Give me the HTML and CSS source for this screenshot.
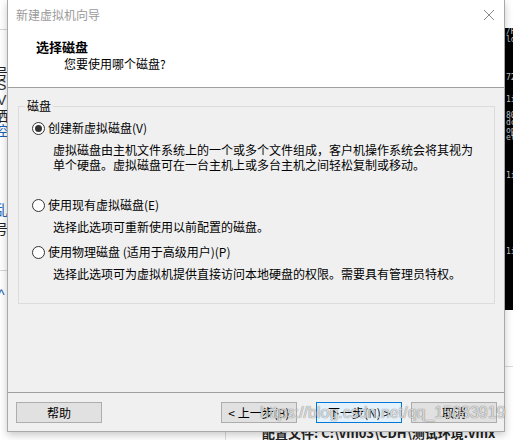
FILE: index.html
```html
<!DOCTYPE html>
<html lang="zh-CN">
<head>
<meta charset="utf-8">
<title>新建虚拟机向导</title>
<link rel="stylesheet" href="styles.css">
</head>
<body>
  <div class="bg-left">
    <div class="bg-left-rule top"></div>
    <span class="frag f1">号</span>
    <span class="frag f2">S</span>
    <span class="frag f3">V</span>
    <span class="frag f4">硒</span>
    <span class="frag f5 blue">控</span>
    <span class="frag f6 blue">乱</span>
    <span class="frag f7">号</span>
    <div class="bg-left-rule mid"></div>
    <span class="frag f8 blue">^</span>
  </div>

  <div class="bg-term">
    <pre>/H
lo




72


1i

80
dc
op
et




1i









1i</pre>
  </div>
  <div class="bg-right-rule"></div>

  <div class="bg-bottom">
    <div class="bg-bottom-vline"></div>
    <span class="bg-bottom-text">配置文件: C:\vm03\CDH\测试环境.vmx</span>
  </div>

  <div class="dialog">
    <div class="titlebar">
      <span class="title">新建虚拟机向导</span>
      <svg class="close" width="12" height="12" viewBox="0 0 12 12"><path d="M1 1 L11 11 M11 1 L1 11" stroke="#8a8a8a" stroke-width="1" fill="none"/></svg>
    </div>
    <div class="header">
      <div class="h-title">选择磁盘</div>
      <div class="h-sub">您要使用哪个磁盘?</div>
    </div>
    <div class="body">
      <fieldset class="group">
        <legend>磁盘</legend>
        <div class="options">
          <div class="opt">
            <span class="radio checked"></span><span class="opt-label">创建新虚拟磁盘(V)</span>
          </div>
          <div class="desc">虚拟磁盘由主机文件系统上的一个或多个文件组成，客户机操作系统会将其视为<br>单个硬盘。虚拟磁盘可在一台主机上或多台主机之间轻松复制或移动。</div>
          <div class="opt opt2">
            <span class="radio"></span><span class="opt-label">使用现有虚拟磁盘(E)</span>
          </div>
          <div class="desc">选择此选项可重新使用以前配置的磁盘。</div>
          <div class="opt opt3">
            <span class="radio"></span><span class="opt-label">使用物理磁盘 (适用于高级用户)(P)</span>
          </div>
          <div class="desc">选择此选项可为虚拟机提供直接访问本地硬盘的权限。需要具有管理员特权。</div>
        </div>
      </fieldset>
    </div>
    <div class="footer">
      <button class="btn">帮助</button>
      <button class="btn back">&lt; 上一步(B)</button>
      <button class="btn next">下一步(N) &gt;</button>
      <button class="btn cancel">取消</button>
    </div>
  </div>

  <div class="watermark">https://blog.csdn.net/qq_15083919</div>
</body>
</html>
```

FILE: styles.css
```css
html, body {
  margin: 0;
  padding: 0;
}
body {
  width: 513px;
  height: 440px;
  position: relative;
  overflow: hidden;
  background: #ffffff;
  font-family: "Noto Sans CJK SC", "Microsoft YaHei", sans-serif;
  font-size: 12px;
  color: #000;
}

/* background windows */
.bg-left {
  position: absolute;
  left: 0;
  top: 0;
  width: 20px;
  height: 440px;
  background: #fff;
}
.bg-left-rule {
  position: absolute;
  left: 0;
  width: 20px;
  height: 1px;
  background: #d6d6d6;
}
.bg-left-rule.top { top: 29px; }
.bg-left-rule.mid { top: 270px; }
.frag {
  position: absolute;
  left: -6px;
  font-size: 14px;
  line-height: 16px;
  color: #222;
}
.frag.blue { color: #1a5fb4; }
.f1 { top: 64px; }
.f2 { top: 77px; left: -3px; font-family: "Liberation Sans", sans-serif; color: #333; }
.f3 { top: 92px; left: -3px; font-family: "Liberation Sans", sans-serif; color: #333; }
.f4 { top: 107px; }
.f5 { top: 122px; }
.f6 { top: 201px; }
.f7 { top: 220px; }
.f8 { top: 287px; left: -2px; font-family: "Liberation Sans", sans-serif; }

.bg-term {
  position: absolute;
  left: 495px;
  top: 28px;
  width: 18px;
  height: 282px;
  background: #000;
  overflow: hidden;
}
.bg-term pre {
  margin: 0;
  padding: 0 0 0 11px;
  font-family: "DejaVu Sans Mono", monospace;
  font-size: 8px;
  line-height: 7.6px;
  color: #c8c8c8;
}
.bg-right-rule {
  position: absolute;
  left: 495px;
  top: 366px;
  width: 18px;
  height: 1px;
  background: #d9d9d9;
}
.bg-bottom {
  position: absolute;
  left: 0;
  top: 420px;
  width: 513px;
  height: 20px;
}
.bg-bottom-vline {
  position: absolute;
  left: 225px;
  top: 0;
  width: 1px;
  height: 20px;
  background: #dadada;
}
.bg-bottom-text {
  position: absolute;
  left: 262px;
  top: 5px;
  font-size: 13px;
  line-height: 16px;
  font-weight: bold;
  color: #222;
  white-space: nowrap;
}

/* dialog window */
.dialog {
  position: absolute;
  left: 7px;
  top: 0;
  width: 498px;
  height: 432px;
  box-sizing: border-box;
  border: 1px solid #a9a9a9;
  border-top: 0;
  background: #f0f0f0;
  box-shadow: 0 3px 8px rgba(0, 0, 0, 0.22);
  display: flex;
  flex-direction: column;
  z-index: 2;
}
.titlebar {
  height: 30px;
  flex: none;
  background: #fff;
  display: flex;
  align-items: center;
  justify-content: space-between;
  padding: 0 9px 0 8px;
}
.title {
  color: #9a9a9a;
  font-size: 12px;
  line-height: 16px;
}
.close {
  display: block;
}
.header {
  height: 58px;
  flex: none;
  box-sizing: border-box;
  background: #fff;
  border-bottom: 1px solid #a0a0a0;
  padding: 9px 0 0 28px;
}
.h-title {
  font-size: 13px;
  font-weight: bold;
  line-height: 16px;
}
.h-sub {
  margin: 1px 0 0 28px;
  line-height: 16px;
}
.body {
  flex: 1;
  padding-top: 11px;
}
.group {
  margin: 0 9px 0 10px;
  padding: 0;
  border: 1px solid #dcdcdc;
  min-width: 0;
}
.group legend {
  margin-left: 6px;
  padding: 0 2px;
  line-height: 14px;
  font-size: 12px;
}
.options {
  padding: 7px 0 22px 13px;
}
.opt {
  display: flex;
  align-items: center;
  height: 16px;
  line-height: 16px;
}
.opt2 { margin-top: 25px; }
.opt3 { margin-top: 10px; }
.radio {
  width: 13px;
  height: 13px;
  box-sizing: border-box;
  border: 1px solid #333;
  border-radius: 50%;
  background: #fff;
  position: relative;
  flex: none;
}
.radio.checked::after {
  content: "";
  position: absolute;
  left: 2px;
  top: 2px;
  width: 7px;
  height: 7px;
  border-radius: 50%;
  background: #333;
}
.opt-label {
  margin-left: 3px;
}
.desc {
  margin: 6px 0 0 21px;
  line-height: 15px;
}
.footer {
  height: 39px;
  flex: none;
  box-sizing: border-box;
  border-top: 1px solid #a0a0a0;
  padding: 9px 7px 0 8px;
  display: flex;
  align-items: flex-start;
}
.btn {
  width: 86px;
  height: 21px;
  box-sizing: border-box;
  border: 1px solid #adadad;
  background: #e1e1e1;
  font-family: "Noto Sans CJK SC", sans-serif;
  font-size: 12px;
  line-height: 17px;
  color: #000;
  padding: 0;
  margin: 0;
}
.btn.back {
  width: 76px;
  margin-left: auto;
}
.btn.next {
  margin-left: 19px;
  background: #e5f1fb;
  border-color: #0078d7;
}
.btn.cancel {
  margin-left: 9px;
}

.watermark {
  position: absolute;
  left: 260px;
  top: 403px;
  font-family: "Liberation Sans", Arial, sans-serif;
  font-size: 16px;
  line-height: 20px;
  color: rgba(255, 255, 255, 0.75);
  text-shadow: 0 0 1px rgba(0, 0, 0, 0.45), 0 0 1px rgba(0, 0, 0, 0.3);
  white-space: nowrap;
  z-index: 3;
}
```
